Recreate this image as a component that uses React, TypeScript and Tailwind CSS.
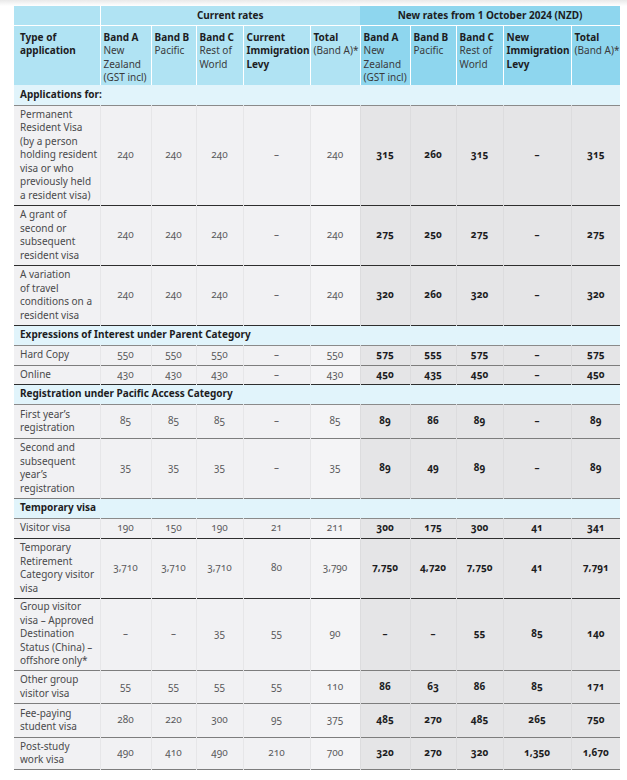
import React from "react";

type Row = {
  label: string[];
  cur: string[];
  nw: string[];
  h: number;
  line: "dark" | "gray";
};

type Section = { title: string; rows: Row[] };

const sections: Section[] = [
  {
    title: "Applications for:",
    rows: [
      {
        label: ["Permanent", "Resident Visa", "(by a person", "holding resident", "visa or who", "previously held", "a resident visa)"],
        cur: ["240", "240", "240", "–", "240"],
        nw: ["315", "260", "315", "–", "315"],
        h: 100,
        line: "dark",
      },
      {
        label: ["A grant of", "second or", "subsequent", "resident visa"],
        cur: ["240", "240", "240", "–", "240"],
        nw: ["275", "250", "275", "–", "275"],
        h: 60,
        line: "dark",
      },
      {
        label: ["A variation", "of travel", "conditions on a", "resident visa"],
        cur: ["240", "240", "240", "–", "240"],
        nw: ["320", "260", "320", "–", "320"],
        h: 60,
        line: "dark",
      },
    ],
  },
  {
    title: "Expressions of Interest under Parent Category",
    rows: [
      {
        label: ["Hard Copy"],
        cur: ["550", "550", "550", "–", "550"],
        nw: ["575", "555", "575", "–", "575"],
        h: 20,
        line: "gray",
      },
      {
        label: ["Online"],
        cur: ["430", "430", "430", "–", "430"],
        nw: ["450", "435", "450", "–", "450"],
        h: 19,
        line: "dark",
      },
    ],
  },
  {
    title: "Registration under Pacific Access Category",
    rows: [
      {
        label: ["First year’s", "registration"],
        cur: ["85", "85", "85", "–", "85"],
        nw: ["89", "86", "89", "–", "89"],
        h: 34,
        line: "gray",
      },
      {
        label: ["Second and", "subsequent", "year’s", "registration"],
        cur: ["35", "35", "35", "–", "35"],
        nw: ["89", "49", "89", "–", "89"],
        h: 60,
        line: "gray",
      },
    ],
  },
  {
    title: "Temporary visa",
    rows: [
      {
        label: ["Visitor visa"],
        cur: ["190", "150", "190", "21", "211"],
        nw: ["300", "175", "300", "41", "341"],
        h: 20,
        line: "dark",
      },
      {
        label: ["Temporary", "Retirement", "Category visitor", "visa"],
        cur: ["3,710", "3,710", "3,710", "80", "3,790"],
        nw: ["7,750", "4,720", "7,750", "41", "7,791"],
        h: 60,
        line: "dark",
      },
      {
        label: ["Group visitor", "visa – Approved", "Destination", "Status (China) –", "offshore only*"],
        cur: ["–", "–", "35", "55", "90"],
        nw: ["–", "–", "55", "85", "140"],
        h: 72,
        line: "gray",
      },
      {
        label: ["Other group", "visitor visa"],
        cur: ["55", "55", "55", "55", "110"],
        nw: ["86", "63", "86", "85", "171"],
        h: 33,
        line: "gray",
      },
      {
        label: ["Fee-paying", "student visa"],
        cur: ["280", "220", "300", "95", "375"],
        nw: ["485", "270", "485", "265", "750"],
        h: 34,
        line: "gray",
      },
      {
        label: ["Post-study", "work visa"],
        cur: ["490", "410", "490", "210", "700"],
        nw: ["320", "270", "320", "1,350", "1,670"],
        h: 32,
        line: "gray",
      },
    ],
  },
];

const widths = [86, 51, 45, 47, 67, 50, 50, 46, 47, 68, 49];

function HeadCell({ bold, rest, bg }: { bold: string[]; rest: string[]; bg: string }) {
  return (
    <th className={`${bg} align-top text-left font-normal pt-[5px] pl-[3px] pr-0 border-l border-white whitespace-nowrap overflow-visible`}>
      {bold.map((b, i) => (
        <div key={"b" + i} className="font-bold text-[#1d1d1f] whitespace-nowrap">
          {b}
        </div>
      ))}
      {rest.map((r, i) => (
        <div key={"r" + i} className="text-[#3a3a3c] whitespace-nowrap">
          {r}
        </div>
      ))}
    </th>
  );
}

export default function App() {
  return (
    <div className="min-h-[780px] w-[627px] overflow-hidden bg-white bg-gradient-to-b from-[#e9e9e9] to-white to-[6px] pt-[6px] pl-[14px]" style={{ fontFamily: '"Noto Sans", "Open Sans", sans-serif' }}>
      <div className="w-[606px] overflow-hidden">
        <table className="table-fixed border-collapse w-[606px] text-[10px] leading-[13.5px]">
          <colgroup>
            {widths.map((w, i) => (
              <col key={i} style={{ width: w }} />
            ))}
          </colgroup>
          <thead>
            <tr className="h-[19px]">
              <th className="bg-[#b0e3f3]"></th>
              <th colSpan={5} className="bg-[#b0e3f3] border-l border-white text-center font-bold text-[#1d1d1f]">
                Current rates
              </th>
              <th colSpan={5} className="bg-[#8ed6ee] text-center font-bold text-[#1d1d1f]">
                New rates from 1 October 2024 (NZD)
              </th>
            </tr>
            <tr className="h-[60px] border-t border-white">
              <th className="bg-[#b0e3f3] align-top text-left pt-[5px] pl-[6px] font-bold text-[#1d1d1f]">
                <div>Type of</div>
                <div>application</div>
              </th>
              <HeadCell bg="bg-[#b0e3f3]" bold={["Band A"]} rest={["New", "Zealand", "(GST incl)"]} />
              <HeadCell bg="bg-[#b0e3f3]" bold={["Band B"]} rest={["Pacific"]} />
              <HeadCell bg="bg-[#b0e3f3]" bold={["Band C"]} rest={["Rest of", "World"]} />
              <HeadCell bg="bg-[#b0e3f3]" bold={["Current", "Immigration", "Levy"]} rest={[]} />
              <HeadCell bg="bg-[#b0e3f3]" bold={["Total"]} rest={["(Band A)*"]} />
              <HeadCell bg="bg-[#8ed6ee]" bold={["Band A"]} rest={["New", "Zealand", "(GST incl)"]} />
              <HeadCell bg="bg-[#8ed6ee]" bold={["Band B"]} rest={["Pacific"]} />
              <HeadCell bg="bg-[#8ed6ee]" bold={["Band C"]} rest={["Rest of", "World"]} />
              <HeadCell bg="bg-[#8ed6ee]" bold={["New", "Immigration", "Levy"]} rest={[]} />
              <HeadCell bg="bg-[#8ed6ee]" bold={["Total"]} rest={["(Band A)*"]} />
            </tr>
          </thead>
          <tbody>
            {sections.map((s, si) => (
              <React.Fragment key={si}>
                <tr className={`h-[20px] ${si === 0 ? "" : "border-t border-[#3a3a3a]"} border-b-[1.5px] border-b-[#8a8a8a]`}>
                  <td colSpan={11} className="bg-[#e1f4fb] pl-[6px] font-bold text-[#1d1d1f] align-middle">
                    {s.title}
                  </td>
                </tr>
                {s.rows.map((r, ri) => {
                  const last = ri === s.rows.length - 1;
                  const lineCls =
                    r.line === "dark" ? "border-b border-[#2e2e2e]" : "border-b-[1.5px] border-[#7d7d7d]";
                  return (
                    <tr key={ri} className={`${last && si === sections.length - 1 ? "border-b-[1.5px] border-[#7d7d7d]" : lineCls}`} style={{ height: r.h }}>
                      <td className="bg-[#f1f1f3] pl-[6px] pr-[2px] text-[#4a4a4c] align-middle">
                        {r.label.map((l, li) => (
                          <div key={li} className="whitespace-nowrap">
                            {l}
                          </div>
                        ))}
                      </td>
                      {r.cur.map((v, ci) => (
                        <td
                          key={"c" + ci}
                          className={`${ci === 4 ? "bg-[#f4f4f6]" : "bg-[#f1f1f3]"} border-l border-[#e6e6e8] text-center align-middle text-[#5a5a5c] oldstyle-nums`}
                        >
                          {v}
                        </td>
                      ))}
                      {r.nw.map((v, ci) => (
                        <td
                          key={"n" + ci}
                          className="bg-[#e5e5e7] border-l border-[#dcdcde] text-center align-middle font-bold text-[#1d1d1f] oldstyle-nums"
                        >
                          {v}
                        </td>
                      ))}
                    </tr>
                  );
                })}
              </React.Fragment>
            ))}
          </tbody>
        </table>
      </div>
    </div>
  );
}
